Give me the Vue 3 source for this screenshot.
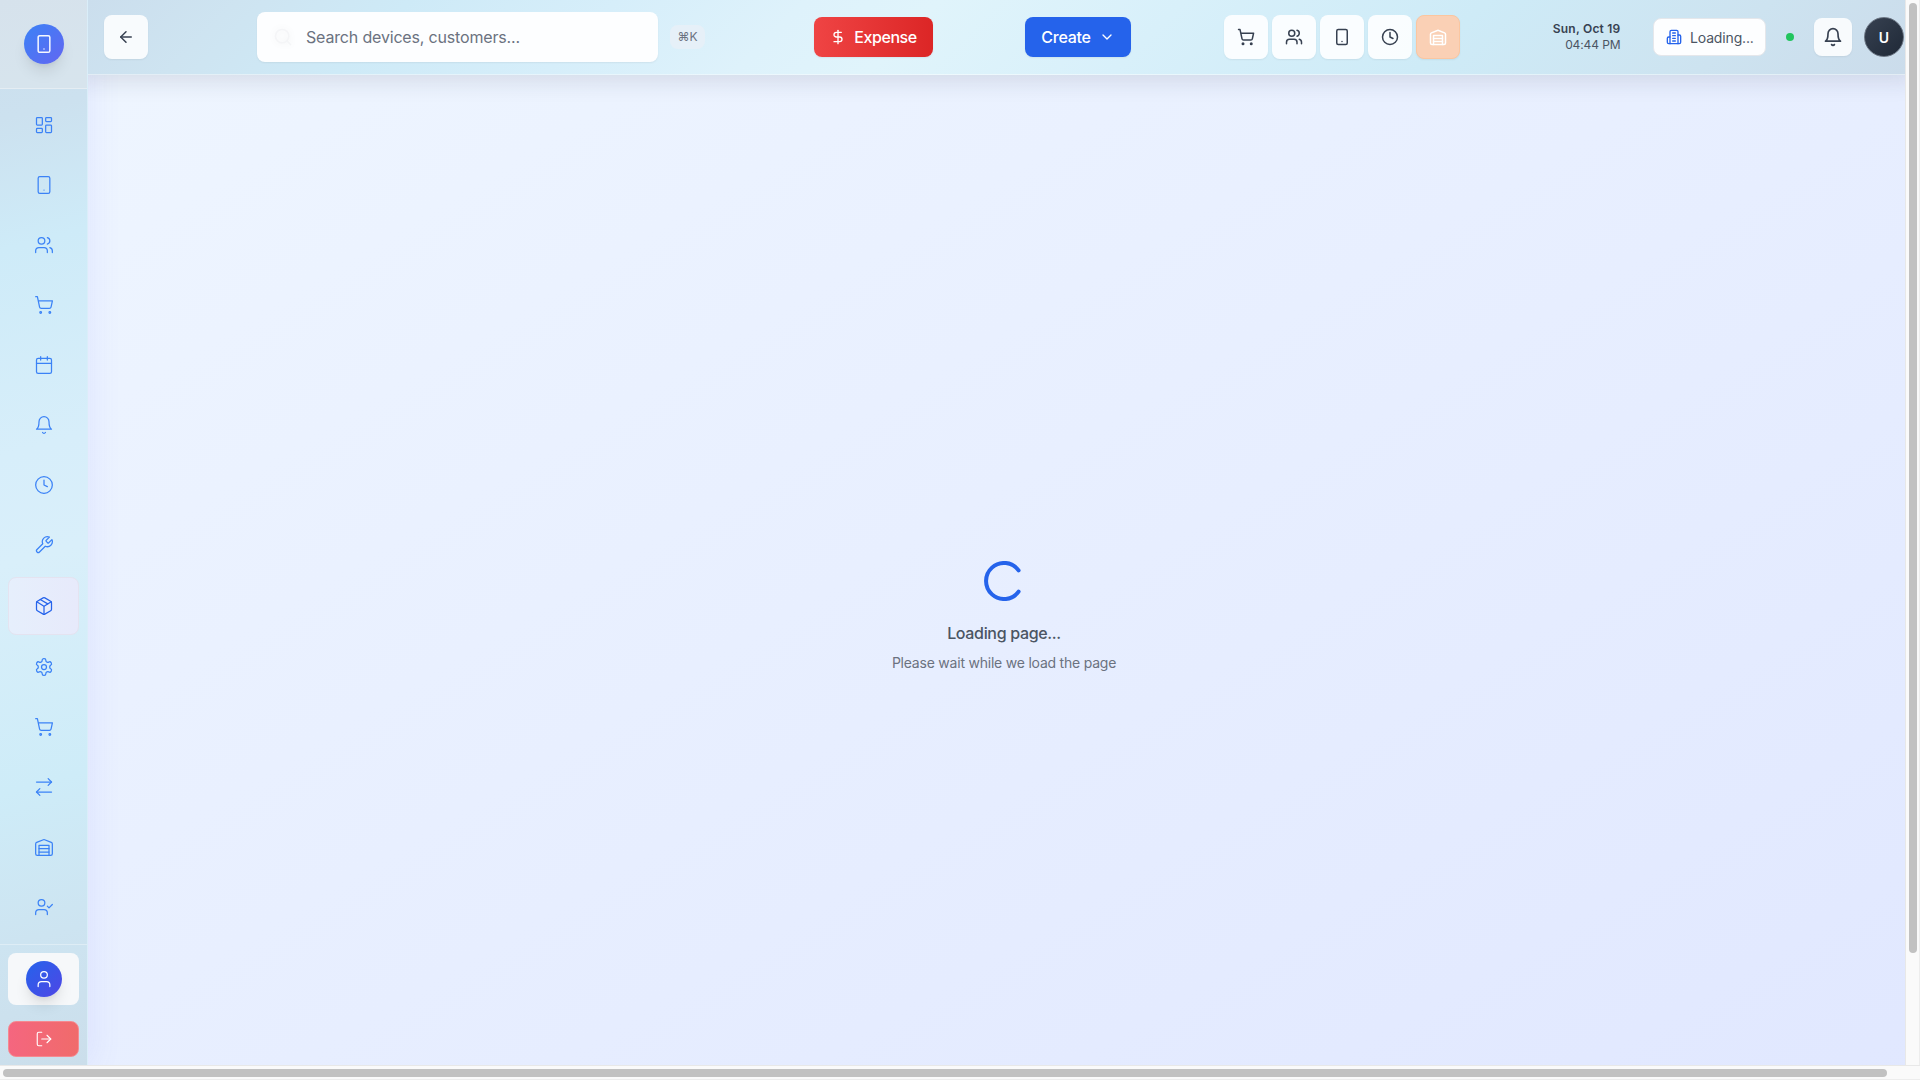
<script setup>
import { h } from 'vue'

const shapes = {
  dashboard: [['rect', { x: 3, y: 3, width: 7, height: 9, rx: 1 }], ['rect', { x: 14, y: 3, width: 7, height: 5, rx: 1 }], ['rect', { x: 14, y: 12, width: 7, height: 9, rx: 1 }], ['rect', { x: 3, y: 16, width: 7, height: 5, rx: 1 }]],
  phone: [['rect', { x: 5, y: 2, width: 14, height: 20, rx: 2 }], 'M12 18h.01'],
  users: ['M16 21v-2a4 4 0 0 0-4-4H6a4 4 0 0 0-4 4v2', ['circle', { cx: 9, cy: 7, r: 4 }], 'M22 21v-2a4 4 0 0 0-3-3.87', 'M16 3.13a4 4 0 0 1 0 7.75'],
  cart: [['circle', { cx: 8, cy: 21, r: 1 }], ['circle', { cx: 19, cy: 21, r: 1 }], 'M2.05 2.05h2l2.66 12.42a2 2 0 0 0 2 1.58h9.78a2 2 0 0 0 1.95-1.57l1.65-7.43H5.12'],
  calendar: ['M8 2v4', 'M16 2v4', ['rect', { x: 3, y: 4, width: 18, height: 18, rx: 2 }], 'M3 10h18'],
  bell: ['M6 8a6 6 0 0 1 12 0c0 7 3 9 3 9H3s3-2 3-9', 'M10.3 21a1.94 1.94 0 0 0 3.4 0'],
  clock: [['circle', { cx: 12, cy: 12, r: 10 }], 'M12 6v6l4 2'],
  wrench: ['M14.7 6.3a1 1 0 0 0 0 1.4l1.6 1.6a1 1 0 0 0 1.4 0l3.77-3.77a6 6 0 0 1-7.94 7.94l-6.91 6.91a2.12 2.12 0 0 1-3-3l6.91-6.91a6 6 0 0 1 7.94-7.94l-3.76 3.76z'],
  package: ['M11 21.73a2 2 0 0 0 2 0l7-4A2 2 0 0 0 21 16V8a2 2 0 0 0-1-1.73l-7-4a2 2 0 0 0-2 0l-7 4A2 2 0 0 0 3 8v8a2 2 0 0 0 1 1.73z', 'M12 22V12', 'M3.3 7l7.703 4.734a2 2 0 0 0 1.994 0L20.7 7', 'M7.5 4.27l9 5.15'],
  settings: ['M12.22 2h-.44a2 2 0 0 0-2 2v.18a2 2 0 0 1-1 1.73l-.43.25a2 2 0 0 1-2 0l-.15-.08a2 2 0 0 0-2.73.73l-.22.38a2 2 0 0 0 .73 2.73l.15.1a2 2 0 0 1 1 1.72v.51a2 2 0 0 1-1 1.74l-.15.09a2 2 0 0 0-.73 2.73l.22.38a2 2 0 0 0 2.73.73l.15-.08a2 2 0 0 1 2 0l.43.25a2 2 0 0 1 1 1.73V20a2 2 0 0 0 2 2h.44a2 2 0 0 0 2-2v-.18a2 2 0 0 1 1-1.73l.43-.25a2 2 0 0 1 2 0l.15.08a2 2 0 0 0 2.73-.73l.22-.39a2 2 0 0 0-.73-2.73l-.15-.08a2 2 0 0 1-1-1.74v-.5a2 2 0 0 1 1-1.74l.15-.09a2 2 0 0 0 .73-2.73l-.22-.38a2 2 0 0 0-2.73-.73l-.15.08a2 2 0 0 1-2 0l-.43-.25a2 2 0 0 1-1-1.73V4a2 2 0 0 0-2-2z', ['circle', { cx: 12, cy: 12, r: 3 }]],
  transfer: ['M17 2l4 4-4 4', 'M3 6h18', 'M7 22l-4-4 4-4', 'M21 18H3'],
  warehouse: ['M22 8.35V20a2 2 0 0 1-2 2H4a2 2 0 0 1-2-2V8.35A2 2 0 0 1 3.26 6.5l8-3.2a2 2 0 0 1 1.48 0l8 3.2A2 2 0 0 1 22 8.35Z', 'M6 18h12', 'M6 14h12', 'M6 22V10h12v12'],
  userCheck: ['M16 21v-2a4 4 0 0 0-4-4H6a4 4 0 0 0-4 4v2', ['circle', { cx: 9, cy: 7, r: 4 }], 'M16 11l2 2 4-4'],
  user: ['M19 21v-2a4 4 0 0 0-4-4H9a4 4 0 0 0-4 4v2', ['circle', { cx: 12, cy: 7, r: 4 }]],
  logout: ['M9 21H5a2 2 0 0 1-2-2V5a2 2 0 0 1 2-2h4', 'M16 17l5-5-5-5', 'M21 12H9'],
  back: ['M12 19l-7-7 7-7', 'M19 12H5'],
  search: [['circle', { cx: 11, cy: 11, r: 8 }], 'M21 21l-4.3-4.3'],
  dollar: ['M12 2v20', 'M17 5H9.5a3.5 3.5 0 0 0 0 7h5a3.5 3.5 0 0 1 0 7H6'],
  chevron: ['M6 9l6 6 6-6'],
  building: ['M6 22V4a2 2 0 0 1 2-2h8a2 2 0 0 1 2 2v18Z', 'M6 12H4a2 2 0 0 0-2 2v6a2 2 0 0 0 2 2h2', 'M18 9h2a2 2 0 0 1 2 2v9a2 2 0 0 1-2 2h-2', 'M10 6h4', 'M10 10h4', 'M10 14h4', 'M10 18h4'],
}

const Icon = (props) =>
  h(
    'svg',
    {
      width: props.size, height: props.size, viewBox: '0 0 24 24', fill: 'none',
      stroke: 'currentColor', 'stroke-width': props.stroke || 2,
      'stroke-linecap': 'round', 'stroke-linejoin': 'round', 'aria-hidden': 'true',
    },
    shapes[props.name].map((s) => (typeof s === 'string' ? h('path', { d: s }) : h(s[0], s[1]))),
  )
Icon.props = ['name', 'size', 'stroke']

const nav = ['dashboard', 'phone', 'users', 'cart', 'calendar', 'bell', 'clock', 'wrench', 'package', 'settings', 'cart', 'transfer', 'warehouse', 'userCheck']
const activeIndex = 8
const quick = ['cart', 'users', 'phone', 'clock', 'warehouse']
</script>

<template>
  <div class="window">
    <div class="row">
      <div class="app">
        <aside class="sidebar">
          <div class="brand">
            <div class="logo"><Icon name="phone" size="20" stroke="1.8" /></div>
          </div>
          <nav class="nav">
            <a v-for="(name, i) in nav" :key="i" class="nav-item" :class="{ active: i === activeIndex }">
              <Icon :name="name" size="20" stroke="1.5" />
            </a>
          </nav>
          <div class="account">
            <div class="profile"><div class="profile-avatar"><Icon name="user" size="20" stroke="1.5" /></div></div>
            <button class="logout"><Icon name="logout" size="18" stroke="1.5" /></button>
          </div>
        </aside>
        <div class="content">
          <header class="topbar">
            <button class="square"><Icon name="back" size="18" /></button>
            <div class="search">
              <Icon class="search-icon" name="search" size="20" />
              <span>Search devices, customers...</span>
            </div>
            <kbd class="shortcut">⌘K</kbd>
            <button class="action expense"><Icon name="dollar" size="16" /><span>Expense</span></button>
            <button class="action create"><span>Create</span><Icon name="chevron" size="16" /></button>
            <div class="quick">
              <button v-for="name in quick" :key="name" class="square" :class="{ disabled: name === 'warehouse' }">
                <Icon :name="name" size="18" />
              </button>
            </div>
            <div class="date"><b>Sun, Oct 19</b><span>04:44 PM</span></div>
            <div class="branch"><Icon name="building" size="16" /><span>Loading...</span></div>
            <i class="status"></i>
            <button class="square bell"><Icon name="bell" size="20" /></button>
            <div class="avatar">U</div>
          </header>
          <main class="main">
            <svg class="spinner" width="40" height="40" viewBox="0 0 40 40">
              <path d="M34.6 9.4A18 18 0 1 0 34.6 30.6" fill="none" stroke="#2563eb" stroke-width="4" stroke-linecap="round" />
            </svg>
            <p class="title">Loading page...</p>
            <p class="hint">Please wait while we load the page</p>
          </main>
        </div>
      </div>
      <div class="bar vertical"><div class="thumb"></div></div>
    </div>
    <div class="bar horizontal"><div class="thumb"></div></div>
  </div>
</template>

<style>
body { margin: 0; overflow: hidden; }
</style>

<style scoped>
* { box-sizing: border-box; }
.window { width: 1920px; height: 1080px; display: flex; flex-direction: column; font-family: Inter, "Noto Sans CJK SC", sans-serif; background: #fafafa; overflow: hidden; }
.row { display: flex; height: 1065px; }
.app { width: 1905px; display: flex; overflow: hidden; background: linear-gradient(to bottom right, #eff6ff, #e0e7ff) 0 0 / 1940px 1160px no-repeat; }
button { border: 0; padding: 0; margin: 0; font: inherit; display: flex; align-items: center; justify-content: center; }
svg { display: block; flex: none; }

.sidebar { width: 88px; flex: none; display: flex; flex-direction: column; border-right: 1px solid #daeef9; background: linear-gradient(165deg, #cbdeed 0%, #cce1ef 11%, #ceebf8 23%, #d7eefa 42%, #d9effa 52%, #ceecf8 73%, #cde4f1 87%, #cbdeeb 100%); box-shadow: 4px 0 32px rgba(99, 102, 241, .09); }
.brand { height: 89px; padding: 24px 0 0 24px; background: rgba(235, 235, 235, .35); border-bottom: 1px solid rgba(255, 255, 255, .35); }
.logo { width: 40px; height: 40px; border-radius: 50%; display: grid; place-items: center; color: #fff; background: linear-gradient(135deg, #3b82f6, #6366f1); box-shadow: 0 10px 15px -3px rgba(0, 0, 0, .1), 0 4px 6px -4px rgba(0, 0, 0, .1); }
.logo svg { opacity: .95; }
.nav { flex: 1; padding: 8px 8px 0; display: flex; flex-direction: column; gap: 4px; }
.nav-item { height: 56px; flex: none; display: grid; place-items: center; padding-left: 1px; color: #3b82f6; border-radius: 8px; }
.nav-item.active { height: 58px; color: #2563eb; border: 1px solid #e4e3f0; background: linear-gradient(90deg, #e6effc, #e7eafb); padding: 0; }
.account { height: 121px; border-top: 1px solid rgba(255, 255, 255, .35); padding: 8px 8px 8px; display: flex; flex-direction: column; gap: 16px; }
.profile { height: 52px; border-radius: 8px; background: #f6f8fa; display: grid; place-items: center; overflow: visible; }
.profile-avatar { width: 36px; height: 36px; border-radius: 50%; color: #fff; display: grid; place-items: center; background: linear-gradient(135deg, #2563eb, #4f46e5); box-shadow: 0 10px 15px -3px rgba(0, 0, 0, .12), 0 4px 6px -4px rgba(0, 0, 0, .1); }
.logout { height: 36px; flex: none; border-radius: 8px; color: #fff; border: 1px solid #f58990; background: linear-gradient(90deg, #f5667f, #f06b6b); }

.content { flex: 1; min-width: 0; display: flex; flex-direction: column; }
.topbar { height: 75px; flex: none; display: flex; align-items: center; padding-left: 16px; border-bottom: 1px solid rgba(255, 255, 255, .45); background: linear-gradient(135deg, #cbdeed 0%, #cee4f1 8%, #ceeaf7 17%, #d6eefa 28%, #def2fb 38%, #e0f4fb 45%, #d8f0fa 58%, #ceebf7 74%, #cde3f0 89%, #cbdceb 100%); box-shadow: 0 -4px 22px 10px rgba(31, 38, 60, .12); position: relative; clip-path: inset(0 0 -60px 0); }
.square { width: 44px; height: 44px; flex: none; border-radius: 8px; color: #374151; background: rgba(255, 255, 255, .86); box-shadow: 0 1px 2px rgba(0, 0, 0, .06); }
.search { width: 401px; height: 50px; flex: none; margin-left: 109px; padding-left: 16px; border-radius: 8px; background: #fdfeff; box-shadow: 0 1px 2px rgba(0, 0, 0, .06); display: flex; align-items: center; gap: 13px; font-size: 16px; letter-spacing: -.17px; color: #6b7280; }
.search-icon { color: #f4f5f7; filter: drop-shadow(0 0 3px rgba(0, 0, 0, .06)); }
.shortcut { width: 35px; height: 24px; flex: none; margin-left: 12px; border-radius: 8px; background: #e6f0f8; color: #6b7280; font: 12px/24px Inter, "DejaVu Sans", sans-serif; text-align: center; }
.action { height: 40px; flex: none; border-radius: 8px; color: #fff; font-size: 16px; font-weight: 500; gap: 8px; box-shadow: 0 1px 2px rgba(0, 0, 0, .06); }
.expense { width: 119px; margin-left: 109px; letter-spacing: -.4px; background: linear-gradient(90deg, #ef4444, #dc2626); }
.create { width: 106px; margin-left: 92px; letter-spacing: -.25px; background: #2563eb; }
.quick { display: flex; gap: 4px; margin-left: 93px; flex: none; }
.quick .square { background: rgba(255, 255, 255, .88); }
.quick .disabled { color: #fff; background: #fad0b5; border: 1px solid #fbc6a0; }
.date { width: 100px; flex: none; margin-left: 60.5px; display: flex; flex-direction: column; align-items: flex-end; font-size: 12px; line-height: 16px; color: #4b5563; }
.date b { font-weight: 600; letter-spacing: .22px; color: #374151; }
.date span { letter-spacing: -.1px; }
.branch { width: 113px; height: 38px; flex: none; margin-left: 32.5px; padding-left: 12px; display: flex; align-items: center; gap: 8px; border-radius: 8px; border: 1px solid #e5e7eb; background: #fdfeff; font-size: 14px; letter-spacing: -.15px; color: #4b5563; }
.branch svg { color: #2563eb; }
.status { width: 8px; height: 8px; flex: none; border-radius: 50%; margin-left: 20px; background: #22c55e; }
.bell { width: 38px; height: 38px; margin-left: 20px; }
.avatar { width: 40px; height: 40px; flex: none; margin-left: 12px; border-radius: 50%; border: 1px solid #6b7583; background: linear-gradient(135deg, #374151, #1f2937); color: #fff; font-size: 14px; font-weight: 600; display: grid; place-items: center; }

.main { flex: 1; display: flex; flex-direction: column; align-items: center; padding: 486px 0 0 15px; }
p { margin: 0; }
.title { margin-top: 20px; font-size: 16px; line-height: 24px; font-weight: 500; letter-spacing: -.33px; color: #4b5563; }
.hint { margin-top: 8px; font-size: 14px; line-height: 20px; letter-spacing: -.22px; color: #6b7280; }

.bar { background: #fafafa; }
.thumb { background: #c1c1c1; border-radius: 4px; }
.vertical { width: 15px; border-left: 1px solid #e8e8e8; border-right: 1px solid #ededed; padding: 3px 0 0 3px; }
.vertical .thumb { width: 8px; height: 950px; }
.horizontal { height: 15px; border-top: 1px solid #e8e8e8; border-bottom: 1px solid #ededed; padding: 3px 0 0 3px; }
.horizontal .thumb { width: 1884px; height: 8px; }
</style>
